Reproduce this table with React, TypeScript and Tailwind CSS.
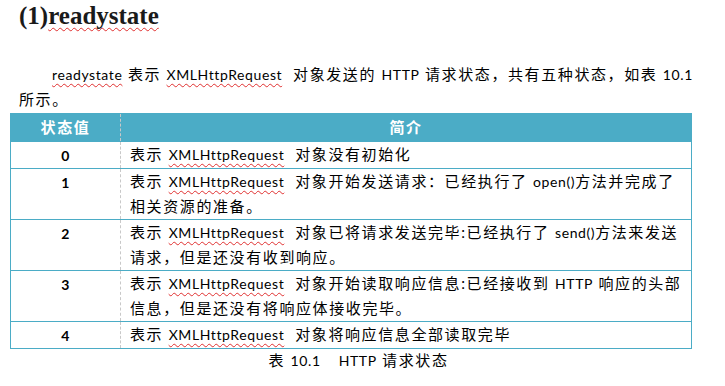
import React from 'react';

const font = "font-['Lato','Noto_Sans_CJK_SC',sans-serif]";

function Wavy({ children }: { children: React.ReactNode }) {
  return (
    <span className="underline decoration-wavy decoration-[#e03030] decoration-1 underline-offset-[3px] [text-decoration-skip-ink:none]">
      {children}
    </span>
  );
}

// latin runs are narrower than the CJK text around them
function L({ children }: { children: React.ReactNode }) {
  return <span className="text-[14px] tracking-[0.6px]">{children}</span>;
}

const XHR = () => (
  <L>
    <Wavy>XMLHttpRequest</Wavy>
  </L>
);

interface Row {
  value: string;
  lines: React.ReactNode[];
}

const rows: Row[] = [
  { value: '0', lines: [<>表示 <XHR />&nbsp; 对象没有初始化</>] },
  {
    value: '1',
    lines: [
      <>表示 <XHR />&nbsp; 对象开始发送请求：已经执行了 <L>open()</L>方法并完成了</>,
      <>相关资源的准备。</>,
    ],
  },
  {
    value: '2',
    lines: [
      <>表示 <XHR />&nbsp; 对象已将请求发送完毕:已经执行了 <L>send()</L>方法来发送</>,
      <>请求，但是还没有收到响应。</>,
    ],
  },
  {
    value: '3',
    lines: [
      <>表示 <XHR />&nbsp; 对象开始读取响应信息:已经接收到 <L>HTTP</L> 响应的头部</>,
      <>信息，但是还没有将响应体接收完毕。</>,
    ],
  },
  { value: '4', lines: [<>表示 <XHR />&nbsp; 对象将响应信息全部读取完毕</>] },
];

export default function App() {
  return (
    <div className={`w-[725px] h-[386px] bg-white text-black overflow-hidden ${font}`}>
      <h1 className="pl-[19px] pt-[2px] h-[30px] font-['Liberation_Serif',serif] font-bold text-[25px] leading-[28px] text-[#1a1a1a]">
        (1)<Wavy>readystate</Wavy>
      </h1>

      <div className="pl-[19px] pt-[32px] text-[15px] tracking-[1.6px] leading-[25px]">
        <div className="pl-[33px] whitespace-nowrap">
          <L>
            <Wavy>readystate</Wavy>
          </L>{' '}
          表示 <XHR />&nbsp; 对象发送的 <L>HTTP</L> 请求状态，共有五种状态，如表 <L>10.1</L>
        </div>
        <div>所示。</div>
      </div>

      <div className="ml-[10px] mt-[1px] w-[682px] border border-[#4bacc6] text-[15px] tracking-[1.6px]">
        <div className="grid grid-cols-[110px_1fr] h-[27px] bg-[#4bacc6] text-white font-bold">
          <div className="flex items-center justify-center border-r border-dashed border-[#c8c8c8]">状态值</div>
          <div className="flex items-center justify-center">简介</div>
        </div>
        {rows.map((r) => (
          <div key={r.value} className="grid grid-cols-[110px_1fr] border-t border-[#4bacc6]">
            <div className="flex justify-center pt-px font-bold leading-[25px] border-r border-dashed border-[#c8c8c8]">
              <L>{r.value}</L>
            </div>
            <div className="pl-[9px] leading-[25px]">
              {r.lines.map((l, i) => (
                <div key={i} className="whitespace-nowrap">
                  {l}
                </div>
              ))}
            </div>
          </div>
        ))}
      </div>

      <div className="pt-[1px] pr-[8px] text-center whitespace-nowrap text-[15px] tracking-[1.6px] leading-[20px]">
        表&nbsp;<L>10.1</L>
        <span className="inline-block w-[18px]" />
        <L>HTTP</L>&nbsp;请求状态
      </div>
    </div>
  );
}
